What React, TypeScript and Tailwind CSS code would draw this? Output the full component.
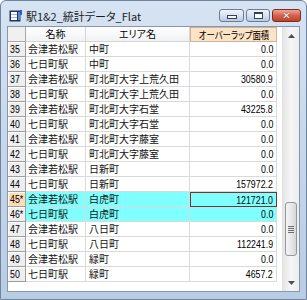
import React from "react";

type Row = {
  n: string;
  a: string;
  b: string;
  v: string;
  hl?: boolean;
  sel?: boolean;
  hdrHl?: boolean;
};

const rows: Row[] = [
  { n: "35", a: "会津若松駅", b: "中町", v: "0.0" },
  { n: "36", a: "七日町駅", b: "中町", v: "0.0" },
  { n: "37", a: "会津若松駅", b: "町北町大字上荒久田", v: "30580.9" },
  { n: "38", a: "七日町駅", b: "町北町大字上荒久田", v: "0.0" },
  { n: "39", a: "会津若松駅", b: "町北町大字石堂", v: "43225.8" },
  { n: "40", a: "七日町駅", b: "町北町大字石堂", v: "0.0" },
  { n: "41", a: "会津若松駅", b: "町北町大字藤室", v: "0.0" },
  { n: "42", a: "七日町駅", b: "町北町大字藤室", v: "0.0" },
  { n: "43", a: "会津若松駅", b: "日新町", v: "0.0" },
  { n: "44", a: "七日町駅", b: "日新町", v: "157972.2" },
  { n: "45*", a: "会津若松駅", b: "白虎町", v: "121721.0", hl: true, sel: true, hdrHl: true },
  { n: "46*", a: "七日町駅", b: "白虎町", v: "0.0", hl: true },
  { n: "47", a: "会津若松駅", b: "八日町", v: "0.0" },
  { n: "48", a: "七日町駅", b: "八日町", v: "112241.9" },
  { n: "49", a: "会津若松駅", b: "緑町", v: "0.0" },
  { n: "50", a: "七日町駅", b: "緑町", v: "4657.2" },
];

function TitleIcon() {
  return (
    <svg width="13" height="12" viewBox="0 0 13 12">
      <rect x="0.5" y="0.5" width="11" height="11" fill="#1d3566" />
      <rect x="2" y="2" width="6" height="8" fill="#ffffff" />
      <rect x="2" y="4" width="6" height="1" fill="#9fb3d6" />
      <rect x="2" y="7" width="6" height="1" fill="#9fb3d6" />
      <rect x="9" y="2" width="2" height="8" fill="#5d86c9" />
      <rect x="11" y="0" width="2" height="5" fill="#2b61b8" />
    </svg>
  );
}

export default function App() {
  return (
    <div className="h-[300px] w-[307px] overflow-hidden bg-white">
      <div className="flex h-full w-full flex-col rounded-t-[6px] border border-[#71849e] bg-gradient-to-b from-[#d6e3f2] via-[#c6d7ec] to-[#b8cce4]">
        {/* Title bar */}
        <div className="flex h-[25px] shrink-0 items-start pl-[8px] pr-[5px]">
          <div className="mt-[9px] flex items-center">
            <TitleIcon />
            <span className="ml-[4px] font-['Noto_Sans_CJK_JP',sans-serif] text-[11px] leading-[12px] text-[#1b1b1b] [font-feature-settings:'palt']">
              駅1&amp;2_統計データ_Flat
            </span>
          </div>
          <div className="ml-auto mt-[8px] flex gap-[2px]">
            <div className="flex h-[13px] w-[25px] items-end justify-center rounded-[3px] border border-[#6b7d94] bg-gradient-to-b from-[#eef3fa] via-[#d7e3f1] to-[#b8cbe3] pb-[2px]">
              <div className="h-[4px] w-[10px] border border-[#31425a] bg-white" />
            </div>
            <div className="flex h-[13px] w-[24px] items-center justify-center rounded-[3px] border border-[#6b7d94] bg-gradient-to-b from-[#eef3fa] via-[#d7e3f1] to-[#b8cbe3]">
              <div className="h-[7px] w-[9px] border border-t-2 border-[#31425a] bg-white" />
            </div>
            <div className="flex h-[13px] w-[29px] items-center justify-center rounded-[3px] border border-[#7b2d22] bg-gradient-to-b from-[#eaa797] via-[#d5614b] to-[#c1412a]">
              <span className="font-['DejaVu_Sans',sans-serif] text-[10px] font-bold leading-[10px] text-white [text-shadow:0_0_1px_#4a1208]">
                ✕
              </span>
            </div>
          </div>
        </div>

        {/* Client area */}
        <div className="mx-[6px] mb-[7px] flex flex-1 border border-[#8698b0] bg-white">
          {/* Grid */}
          <div className="flex w-[274px] flex-col bg-white">
            {/* Header */}
            <div className="flex h-[15px] shrink-0">
              <div className="w-[18px] border-b border-r border-[#a7a7a7] bg-[#f0f0f0]" />
              <div className="flex w-[60px] items-center justify-center border-b border-r border-[#d5d5d5] bg-gradient-to-b from-white to-[#f1f2f4] font-['Noto_Sans_CJK_JP',sans-serif] text-[10px] leading-[14px] text-black">
                名称
              </div>
              <div className="flex w-[104px] items-center justify-center border-b border-r border-[#d5d5d5] bg-gradient-to-b from-white to-[#f1f2f4] font-['Noto_Sans_CJK_JP',sans-serif] text-[10px] leading-[14px] text-black [font-feature-settings:'palt']">
                エリア名
              </div>
              <div className="flex w-[87px] items-center justify-center overflow-hidden border border-[#c9b59b] bg-[#fde3c6] font-['Noto_Sans_CJK_JP',sans-serif] text-[10px] leading-[13px] text-black [font-feature-settings:'palt']">
                <span className="inline-block shrink-0 scale-x-[0.84] whitespace-nowrap">オーバーラップ面積</span>
              </div>
            </div>
            {/* Rows */}
            {rows.map((r) => {
              const bg = r.hl ? "bg-[#80ffff]" : "bg-white";
              return (
                <div key={r.n} className="flex h-[15px] shrink-0">
                  <div
                    className={`flex w-[18px] items-center border-b border-r border-[#9d9d9d] pl-[2px] font-['Liberation_Sans',sans-serif] text-[11px] leading-[14px] text-black shadow-[inset_1px_1px_0_#ffffff] ${
                      r.hdrHl ? "bg-[#fedcb4]" : "bg-[#eeeeee]"
                    }`}
                  >
                    <span className="inline-block origin-left scale-x-[0.8] whitespace-nowrap">{r.n}</span>
                  </div>
                  <div
                    className={`flex w-[60px] items-center border-b border-r border-[#dadada] pl-[2px] font-['Noto_Sans_CJK_JP',sans-serif] text-[10px] leading-[14px] text-[#111111] ${bg}`}
                  >
                    {r.a}
                  </div>
                  <div
                    className={`flex w-[104px] items-center whitespace-nowrap border-b border-r border-[#dadada] pl-[3px] font-['Noto_Sans_CJK_JP',sans-serif] text-[10px] leading-[14px] text-[#111111] ${bg}`}
                  >
                    {r.b}
                  </div>
                  <div
                    className={`flex w-[87px] items-center justify-end border-b border-r pr-[3px] font-['Liberation_Sans',sans-serif] text-[11px] leading-[14px] text-black ${bg} ${
                      r.sel ? "border-l border-t border-[#7e2f2f]" : "border-[#dadada]"
                    }`}
                  >
                    <span className="inline-block origin-right scale-x-[0.8] whitespace-nowrap">{r.v}</span>
                  </div>
                </div>
              );
            })}
          </div>

          {/* Scrollbar */}
          <div className="flex w-[17px] flex-col border-l border-[#e2e2e2] bg-gradient-to-r from-[#e6e6e6] via-[#f6f6f6] to-[#ededed]">
            <div className="flex h-[17px] shrink-0 items-center justify-center">
              <svg width="7" height="4" viewBox="0 0 7 4">
                <path d="M3.5 0 L7 4 L0 4 Z" fill="#4f4f4f" />
              </svg>
            </div>
            <div className="flex flex-1 flex-col">
              <div className="h-[158px] shrink-0" />
              <div className="mx-[2px] flex h-[54px] shrink-0 items-center justify-center rounded-[3px] border border-[#979797] bg-gradient-to-r from-[#f4f4f4] via-[#e9e9e9] to-[#d6d6d6]">
                <div className="flex flex-col gap-[1px]">
                  <div className="h-[1px] w-[6px] bg-[#6f6f6f]" />
                  <div className="h-[1px] w-[6px] bg-[#6f6f6f]" />
                  <div className="h-[1px] w-[6px] bg-[#6f6f6f]" />
                  <div className="h-[1px] w-[6px] bg-[#6f6f6f]" />
                </div>
              </div>
              <div className="flex-1" />
            </div>
            <div className="flex h-[17px] shrink-0 items-center justify-center">
              <svg width="7" height="4" viewBox="0 0 7 4">
                <path d="M0 0 L7 0 L3.5 4 Z" fill="#4f4f4f" />
              </svg>
            </div>
          </div>
        </div>
      </div>
    </div>
  );
}
